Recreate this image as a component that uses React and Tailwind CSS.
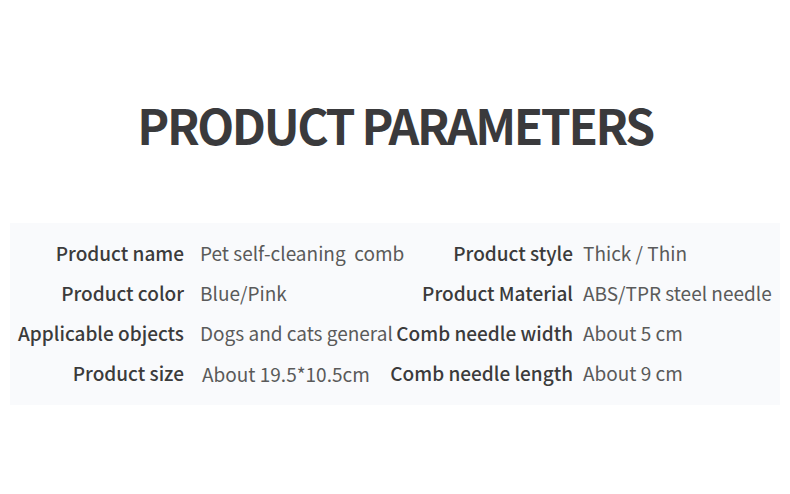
import React from 'react';

const rows = [
  ['Product name', 'Pet self-cleaning  comb', 'Product style', 'Thick / Thin'],
  ['Product color', 'Blue/Pink', 'Product Material', 'ABS/TPR steel needle'],
  ['Applicable objects', 'Dogs and cats general', 'Comb needle width', 'About 5 cm'],
  ['Product size', 'About 19.5*10.5cm', 'Comb needle length', 'About 9 cm'],
];

const App = () => {
  return (
    <div
      className="w-[790px] h-[494px] bg-white overflow-hidden"
      style={{ fontFamily: '"Noto Sans CJK SC", "Noto Sans", sans-serif' }}
    >
      <h1 className="pt-[100px] text-center text-[48px] leading-none font-bold text-[#3a3a3c] tracking-[-2.4px]">
        PRODUCT PARAMETERS
      </h1>

      {/* parameter panel */}
      <div className="mt-[75px] mx-[10px] h-[182px] bg-[#f9fafc] pt-[10px]">
        {rows.map(([l1, v1, l2, v2], i) => (
          <div key={l1} className="flex items-center h-[40px] whitespace-nowrap text-[19px]">
            <div className="w-[174px] text-right font-medium text-[#3b3b3b]">{l1}</div>
            <div className={`w-[180px] ml-[16px] text-[#5a5a5a] whitespace-pre ${i === 3 ? 'pl-[2px] pt-[2px]' : ''}`}>{v1}</div>
            <div className="w-[193px] text-right font-medium text-[#3b3b3b]">{l2}</div>
            <div className="ml-[10px] text-[#5a5a5a]">{v2}</div>
          </div>
        ))}
      </div>
    </div>
  );
};

export default App;
